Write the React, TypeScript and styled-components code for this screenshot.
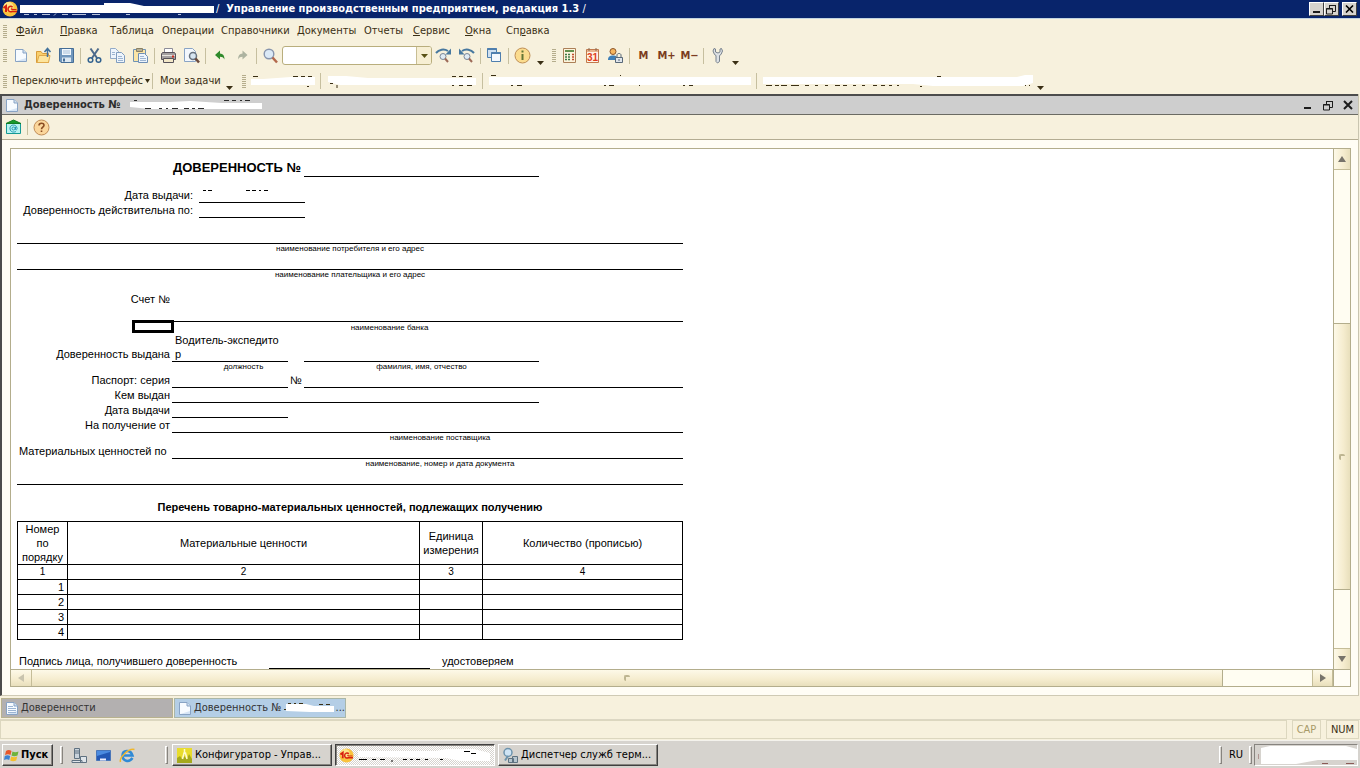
import React from "react";
import styled, { createGlobalStyle, css } from "styled-components";

const ui = `"DejaVu Sans Condensed", "DejaVu Sans", sans-serif`;
const cream = "#f7f1dd";
const ink = "#3a2f14";

const GlobalStyle = createGlobalStyle`
  * { box-sizing: border-box; }
  body { margin: 0; background: ${cream}; font: 11px/14px ${ui}; color: ${ink}; }
  button, input { font: inherit; color: inherit; margin: 0; padding: 0; border: 0; background: none; border-radius: 0; }
  svg { display: block; flex: none; }
`;

/* ---------- frame ---------- */
const Shell = styled.div`
  height: 100vh;
  display: flex;
  flex-direction: column;
  overflow: hidden;
  white-space: nowrap;
`;
const TitleBar = styled.header`
  flex: none;
  height: 19px;
  display: flex;
  align-items: center;
  padding: 0 3px 0 2px;
  background: #08246b;
  border-bottom: 1px solid #c3d4e0;
  color: #fff;
`;
const AppTitle = styled.h1`
  margin: 0;
  flex: 1;
  display: flex;
  align-items: center;
  gap: 2px;
  font-size: 11px;
  font-weight: bold;
`;
const Slash = styled.span`
  font-weight: normal;
`;
const CaptionButton = styled.button<{ $apart?: boolean }>`
  width: 15px;
  height: 14px;
  display: grid;
  place-items: center;
  background: #d6d3ce;
  border: 1px solid;
  border-color: #fff #404040 #404040 #fff;
  margin-left: ${(p) => (p.$apart ? 3 : 0)}px;
`;
const MenuBar = styled.nav`
  flex: none;
  height: 24px;
  display: flex;
  align-items: center;
  padding-left: 3px;
`;
const MenuList = styled.div`
  display: grid;
  grid-template-columns: 44px 50px 52px 59px 76px 67px 49px 52px 41px 60px;
  padding-left: 9px;
`;
const MenuItem = styled.button`
  text-align: left;
  font-size: 11px;
`;
const Grip = styled.span`
  flex: none;
  width: 4px;
  height: 13px;
  background: repeating-linear-gradient(#b5ad8c 0 1px, transparent 1px 2px);
`;
const ToolRow = styled.div<{ $h: number }>`
  flex: none;
  height: ${(p) => p.$h}px;
  display: flex;
  align-items: center;
  padding-left: 3px;
`;
const Tools = styled.div`
  display: flex;
  align-items: center;
  padding-left: 2px;
`;
const ToolButton = styled.button`
  width: 23px;
  height: 24px;
  display: grid;
  place-items: center;
`;
const MemoryButton = styled(ToolButton)`
  font-size: 11px;
  font-weight: bold;
  color: #7b3c22;
`;
const Divider = styled.span`
  flex: none;
  width: 1px;
  height: 16px;
  margin: 0 2px;
  background: #c6bf9f;
`;
const More = styled.button`
  width: 13px;
  height: 18px;
  display: grid;
  place-items: end center;
`;
const Combo = styled.div`
  width: 150px;
  height: 19px;
  display: flex;
  background: #fff;
  border: 1px solid #b9ae7d;
  border-radius: 3px;
  overflow: hidden;
`;
const ComboInput = styled.input`
  flex: 1;
  min-width: 0;
  outline: 0;
  padding-left: 4px;
`;
const ComboArrow = styled.button`
  width: 15px;
  display: grid;
  place-items: center;
  background: #f7efd3;
  border-left: 1px solid #c8be94;
`;
const TextButton = styled.button<{ $w: number }>`
  width: ${(p) => p.$w}px;
  display: flex;
  align-items: center;
  gap: 2px;
  padding-left: 5px;
`;

/* ---------- document window ---------- */
const Child = styled.section`
  flex: 1;
  min-height: 0;
  display: flex;
  flex-direction: column;
  margin-right: 1px;
  border-left: 2px solid #4c4c4c;
  border-right: 1px solid #c9c5b0;
  border-bottom: 1px solid #cfcab4;
  background: #fffdf5;
`;
const ChildTitle = styled.header`
  flex: none;
  height: 21px;
  display: flex;
  align-items: center;
  padding-left: 3px;
  background: #cecece;
  border-top: 2px solid #4c4c4c;
  border-bottom: 1px solid #6b6b63;
  color: #2c2c2c;
`;
const ChildName = styled.h2`
  flex: 1;
  margin: 0;
  display: flex;
  align-items: center;
  font-size: 11px;
  gap: 5px;
`;
const PlainButton = styled.button`
  width: 20px;
  height: 16px;
  display: grid;
  place-items: center;
`;
const ChildTools = styled.div`
  flex: none;
  height: 25px;
  display: flex;
  align-items: center;
  background: ${cream};
  border-bottom: 1px solid #b3ac92;
`;
const Viewer = styled.div`
  flex: 1;
  min-height: 0;
  margin: 8px 7px 8px 8px;
  display: grid;
  grid-template: minmax(0, 1fr) 17px / minmax(0, 1fr) 17px;
  border: 1px solid #b3ad8c;
`;
const Page = styled.main`
  overflow: hidden;
  background: #fff;
  color: #000;
  padding: 9px 6px 0;
  font: 11px/14px "Liberation Sans", Arial, sans-serif;
`;
const Bar = styled.div<{ $vertical?: boolean }>`
  display: flex;
  flex-direction: ${(p) => (p.$vertical ? "column" : "row")};
  background: #fffdf2;
  border: 0 solid #b3ad8c;
  ${(p) => (p.$vertical ? css`border-left-width: 1px;` : css`border-top-width: 1px;`)}
`;
const barFill = (v?: boolean) =>
  `linear-gradient(${v ? "90deg" : "180deg"}, #fdf9e8, #f5ecce 60%, #e8dfbc)`;
const BarButton = styled.button<{ $vertical?: boolean }>`
  flex: 0 0 21px;
  display: grid;
  place-items: center;
  background: ${(p) => barFill(p.$vertical)};
  border: 0 solid #c5bd98;
  ${(p) => (p.$vertical ? css`border-width: 1px 0;` : css`border-width: 0 1px;`)}
  &:first-child { border-top-width: 0; border-left-width: 0; }
  &:last-child { border-bottom-width: 0; }
`;
const Track = styled.div<{ $grow: number }>`
  flex: ${(p) => p.$grow} 1 0;
`;
const Thumb = styled(Track)<{ $vertical?: boolean }>`
  display: grid;
  place-items: center;
  background: ${(p) => barFill(p.$vertical)};
  border: 0 solid #b3ad8c;
  ${(p) => (p.$vertical ? css`border-width: 1px 0;` : css`border-width: 0 1px 0 0;`)}
  &::after { content: ""; width: 4px; height: 4px; border: 1px solid #bdb591; border-width: 2px 0 0 2px; border-radius: 2px; }
`;
const Corner = styled.div`
  background: #fffdf5;
  border-top: 1px solid #b3ad8c;
  border-left: 1px solid #b3ad8c;
`;

/* ---------- printed form ---------- */
const Form = styled.article`
  width: 666px;
`;
const Row = styled.div<{ $h: number }>`
  height: ${(p) => p.$h}px;
  display: flex;
  align-items: flex-end;
`;
const Label = styled.span<{ $w: number; $left?: boolean }>`
  width: ${(p) => p.$w}px;
  padding: 0 2px 1px;
  text-align: ${(p) => (p.$left ? "left" : "right")};
`;
const Blank = styled.span<{ $w?: number }>`
  ${(p) => (p.$w ? `width: ${p.$w}px;` : "flex: 1;")}
  align-self: stretch;
  display: flex;
  align-items: flex-end;
  border-bottom: 1px solid #000;
`;
const Space = styled.span<{ $w: number }>`
  width: ${(p) => p.$w}px;
`;
const Hint = styled.span<{ $w?: number }>`
  ${(p) => (p.$w ? `width: ${p.$w}px;` : "flex: 1;")}
  text-align: center;
  font-size: 8px;
  line-height: 10px;
`;
const FormTitle = styled.h3`
  margin: 0;
  width: 287px;
  padding-right: 3px;
  text-align: right;
  font-size: 13px;
  line-height: 18px;
`;
const ActiveCell = styled.span`
  width: 42px;
  height: 13px;
  border: 3px solid #000;
`;
const Position = styled.span`
  width: 112px;
  padding-left: 3px;
  white-space: pre-line;
`;
const ListTitle = styled.h4`
  margin: 0;
  padding: 15px 0 7px;
  text-align: center;
  font-size: 11px;
  line-height: 14px;
`;
const Goods = styled.table`
  width: 666px;
  table-layout: fixed;
  border-collapse: collapse;
  white-space: normal;
  th, td { border: 1px solid #000; padding: 0; height: 15px; line-height: 14px; font-weight: normal; text-align: center; }
  th:first-child { padding: 0 4px; }
  tbody td:first-child { text-align: right; padding-right: 3px; }
  thead tr:first-child th { height: 43px; }
  thead tr + tr th { font-size: 10px; }
`;

/* ---------- bottom bars ---------- */
const WindowTabs = styled.div`
  flex: none;
  height: 24px;
  display: flex;
  gap: 1px;
  padding: 2px 1px;
  border-bottom: 1px solid #dcd7c3;
`;
const WindowTab = styled.button<{ $active?: boolean }>`
  width: 172px;
  height: 20px;
  display: flex;
  align-items: center;
  gap: 2px;
  padding-left: 3px;
  border: 1px solid ${(p) => (p.$active ? "#a9b6a8" : "#b8b28f")};
  background: ${(p) => (p.$active ? "#b4cee6" : "#b3b0b0")};
  color: #333;
`;
const StatusBar = styled.footer`
  flex: none;
  height: 20px;
  display: flex;
  gap: 5px;
  padding: 0 1px 1px 0;
`;
const StatusCell = styled.span<{ $w?: number; $dim?: boolean }>`
  ${(p) => (p.$w ? `width: ${p.$w}px;` : "flex: 1;")}
  display: grid;
  place-items: center;
  border: 1px solid #dcd7bf;
  color: ${(p) => (p.$dim ? "#a89a68" : ink)};
`;
const Taskbar = styled.footer`
  flex: none;
  height: 28px;
  display: flex;
  align-items: center;
  padding: 2px 2px 1px;
  background: #d6d3ce;
  border-top: 1px solid #f4f2ec;
  color: #000;
`;
const raised = css`
  border: 1px solid;
  border-color: #fff #404040 #404040 #fff;
  box-shadow: inset -1px -1px #87847f;
`;
const StartButton = styled.button`
  width: 51px;
  height: 22px;
  display: flex;
  align-items: center;
  gap: 1px;
  padding-left: 1px;
  font-weight: bold;
  ${raised}
`;
const TaskGrip = styled.span<{ $m: string }>`
  width: 3px;
  height: 18px;
  margin: ${(p) => p.$m};
  border: 1px solid;
  border-color: #fff #87847f #87847f #fff;
`;
const QuickIcon = styled.button`
  width: 24px;
  height: 20px;
  display: grid;
  place-items: center;
`;
const Task = styled.button<{ $active?: boolean }>`
  width: 160px;
  height: 22px;
  margin-right: 3px;
  display: flex;
  align-items: center;
  gap: 2px;
  padding-left: 3px;
  ${raised}
  ${(p) =>
    p.$active &&
    css`
      border-color: #404040 #fff #fff #404040;
      box-shadow: inset 1px 1px #87847f;
      background: repeating-conic-gradient(#fff 0 25%, #d6d3ce 0 50%) 0 0 / 2px 2px;
    `}
`;
const Stretch = styled.span`
  flex: 1;
`;
const Tray = styled.span`
  width: 104px;
  height: 22px;
  display: flex;
  align-items: center;
  padding-left: 3px;
  border: 1px solid;
  border-color: #87847f #fff #fff #87847f;
`;

/* ---------- drawings ---------- */
const Svg = ({ w = 17, h = 17, children }: { w?: number; h?: number; children: React.ReactNode }) => (
  <svg width={w} height={h} viewBox={`0 0 ${w} ${h}`} fill="none" aria-hidden="true">
    {children}
  </svg>
);
const Down = ({ color = ink, w = 7 }: { color?: string; w?: number }) => (
  <Svg w={w} h={4}>
    <path d={`M0 0H${w}L${w / 2} 4Z`} fill={color} />
  </Svg>
);
const Triangle = ({ turn }: { turn: "up" | "down" | "left" | "right" }) => {
  const d = { up: "M4 1L8 7H0Z", down: "M0 1H8L4 7Z", left: "M7 0V8L1 4Z", right: "M1 0V8L7 4Z" }[turn];
  return (
    <Svg w={8} h={8}>
      <path d={d} fill={turn === "left" ? "#c9c4ae" : "#77736a"} />
    </Svg>
  );
};
const OneC = ({ size = 16 }: { size?: number }) => (
  <svg width={size} height={size} viewBox="0 0 16 16" aria-hidden="true">
    <circle cx="8" cy="8" r="7.500" fill="#f9c23c" />
    <circle cx="6.500" cy="6" r="5" fill="#fde489" />
    <path d="M1.500 7l2.500-2v6" stroke="#d8200f" strokeWidth="2" fill="none" />
    <path d="M10.500 6.200C9 4.500 6 5.300 6 8c0 2.500 2 3 4 2.500h5" stroke="#d8200f" strokeWidth="1.600" fill="none" />
    <path d="M10.500 7.800c-1.500-.6-2 .4-1 .7h5" stroke="#d8200f" strokeWidth="1" fill="none" />
  </svg>
);
const Sheet = ({ lined }: { lined?: boolean }) => (
  <Svg w={14} h={15}>
    <path d="M1.500 1.500H9L12.500 5V13.500H1.500Z" fill="#f7fbff" stroke="#88a3c4" />
    <path d="M9 1.500V5H12.500" stroke="#88a3c4" fill="#cfe0f2" />
    <path d="M2.500 13H12V10Z" fill="#d5e4f5" />
    {lined && <path d="M3 5.500h5M3 7.500h8M3 9.500h8M3 11.500h8" stroke="#9bb4d3" />}
  </Svg>
);
const icons = {
  open: (
    <Svg>
      <path d="M1.500 15.500V4.500H6L7.500 6.500H13.500V15.500Z" fill="#f9cf6c" stroke="#d99c3a" />
      <path d="M2 15.500L4 8.500H15L13.500 15.500Z" fill="#fde59d" stroke="#e0a94b" />
      <path d="M12.500 10V2.500M9.500 5l3-3.500 3 3.500" stroke="#41719b" strokeWidth="1.500" />
    </Svg>
  ),
  save: (
    <Svg>
      <path d="M1.500 1.500H15.500V15.500H3L1.500 14Z" fill="#7197bd" stroke="#456d96" />
      <path d="M4 2H13V8H4Z" fill="#f1f7fc" />
      <path d="M5 4h7M5 6h7" stroke="#a6bfd8" />
      <path d="M4 10.500H13V15H4Z" fill="#dce8f2" />
      <path d="M6 11.500v3" stroke="#456d96" strokeWidth="2" />
    </Svg>
  ),
  cut: (
    <Svg>
      <path d="M4.500 1.500L11 11M12.500 1.500L6 11" stroke="#4d6a8b" strokeWidth="2" />
      <circle cx="4.500" cy="13" r="2.300" stroke="#31618f" strokeWidth="1.500" />
      <circle cx="12.500" cy="13" r="2.300" stroke="#31618f" strokeWidth="1.500" />
    </Svg>
  ),
  copy: (
    <Svg>
      <path d="M1.500 1.500H6.500L9.500 4.500V11.500H1.500Z" fill="#eef5fc" stroke="#93abc8" />
      <path d="M7.500 5.500H12.500L15.500 8.500V15.500H7.500Z" fill="#eef5fc" stroke="#7f9cbf" />
      <path d="M3 5.500h3M3 7.500h3M9 9.500h4M9 11.500h5M9 13.500h5" stroke="#9db5d2" />
    </Svg>
  ),
  paste: (
    <Svg>
      <path d="M1.500 2.500H13.500V14.500H1.500Z" fill="#fbe5a6" stroke="#6f93b5" />
      <path d="M4.500 1.500H10.500V4.500H4.500Z" fill="#b9b196" stroke="#8a8165" />
      <path d="M6.500 6.500H12.500L15.500 9.500V15.500H6.500Z" fill="#eef5fc" stroke="#6f8fb5" />
      <path d="M8 9.500h4M8 11.500h6M8 13.500h6" stroke="#9db5d2" />
    </Svg>
  ),
  print: (
    <Svg>
      <path d="M4.500 6V1.500H12.500V6" fill="#fff" stroke="#8d8d99" />
      <path d="M2.500 5.500H14.500L15.500 7V12.500H1.500V7Z" fill="#a4a0a0" stroke="#57525a" />
      <path d="M2 8.500H15" stroke="#e8e4df" />
      <path d="M3.500 11.500H13.500V15.500H3.500Z" fill="#f3e8c8" stroke="#57525a" />
      <path d="M12 9.500h2" stroke="#c52a1e" strokeWidth="2" />
    </Svg>
  ),
  preview: (
    <Svg>
      <path d="M1.500 1.500H9.500L12.500 4.500V14.500H1.500Z" fill="#f4f8fd" stroke="#8aa4c5" />
      <circle cx="10" cy="9" r="3.500" fill="#d7e5f1" stroke="#68737f" strokeWidth="1.500" />
      <path d="M12.500 11.500L16 15.500" stroke="#6b4a3c" strokeWidth="2.500" />
    </Svg>
  ),
  undo: (
    <Svg>
      <path d="M4 8L9 3.500V6.500C12 6.500 13.500 8.500 13.500 12.500C12.500 10.500 11 9.800 9 9.800V12.500Z" fill="#2f8a2b" />
    </Svg>
  ),
  redo: (
    <Svg>
      <path d="M13.500 8L8.500 3.500V6.500C5.500 6.500 4 8.500 4 12.500C5 10.500 6.500 9.800 8.500 9.800V12.500Z" fill="#adb3a0" />
    </Svg>
  ),
  find: (
    <Svg>
      <circle cx="7" cy="7" r="4.800" fill="#dbe9f6" stroke="#8795ad" strokeWidth="1.400" />
      <path d="M10.500 10.500L15 15.500" stroke="#b3684c" strokeWidth="2.500" />
    </Svg>
  ),
  next: (
    <Svg>
      <path d="M1 6C4 2.500 9 1.500 13 4" stroke="#47789f" strokeWidth="2" />
      <path d="M16 1.500V7.500H10.500Z" fill="#47789f" />
      <circle cx="8" cy="9.500" r="3" fill="#e0ebf4" stroke="#7b8798" />
      <path d="M10 11.500L13 15" stroke="#9d6a58" strokeWidth="2" />
    </Svg>
  ),
  prev: (
    <Svg>
      <path d="M16 6C13 2.500 8 1.500 4 4" stroke="#47789f" strokeWidth="2" />
      <path d="M1 1.500V7.500H6.500Z" fill="#47789f" />
      <circle cx="9" cy="9.500" r="3" fill="#e0ebf4" stroke="#7b8798" />
      <path d="M11 11.500L14 15" stroke="#9d6a58" strokeWidth="2" />
    </Svg>
  ),
  windows: (
    <Svg>
      <path d="M1.500 1.500H10.500V10.500H1.500Z" fill="#cfe0f0" stroke="#4f7fae" />
      <path d="M1.500 2H10.500" stroke="#4f7fae" strokeWidth="2" />
      <path d="M5.500 5.500H14.500V14.500H5.500Z" fill="#f4f8fc" stroke="#4f7fae" />
      <path d="M5.500 6H14.500" stroke="#4f7fae" strokeWidth="2" />
    </Svg>
  ),
  info: (
    <Svg>
      <circle cx="8.500" cy="8.500" r="7.500" fill="#fbdc8e" stroke="#bf8f55" />
      <path d="M8.500 7V13M8.500 3.500V5.500" stroke="#647534" strokeWidth="2" />
    </Svg>
  ),
  calc: (
    <Svg>
      <path d="M2.500 1.500H14.500V15.500H2.500Z" fill="#fdf4dc" stroke="#ac8058" />
      <path d="M4 4H13" stroke="#64904d" strokeWidth="2" />
      <path d="M4 7.500H10M4 10H10M4 12.500H10" stroke="#3f7a45" strokeWidth="1.500" strokeDasharray="2 1" />
      <path d="M11 7.500h2M11 10h2M11 12.500h2" stroke="#c04a2d" strokeWidth="1.500" />
    </Svg>
  ),
  calendar: (
    <Svg>
      <path d="M2.500 2.500H14.500V15.500H2.500Z" fill="#fff3e6" stroke="#c1794d" />
      <path d="M3 4H14" stroke="#e9b48e" strokeWidth="2" />
      <path d="M5 1v3M12 1v3" stroke="#8d6a50" />
      <text x="3" y="14" fontFamily="Liberation Sans, sans-serif" fontWeight="bold" fontSize="10" fill="#e03d1d">31</text>
    </Svg>
  ),
  user: (
    <Svg>
      <circle cx="6" cy="4.500" r="3" fill="#f5b55e" stroke="#8b5428" />
      <path d="M1 13C1 9.500 3 8.500 6 8.500S10.500 9.500 10.500 13Z" fill="#3d7fb8" />
      <path d="M8.500 10.500H15.500V15.500H8.500Z" fill="#dfe5eb" stroke="#586878" />
      <path d="M10 10V8C10 6 14 6 14 8V10" stroke="#586878" />
      <path d="M12 12v2" stroke="#586878" />
    </Svg>
  ),
  wrench: (
    <Svg>
      <path d="M5 1.500L4 4L5.500 7.500L7 8.500V14.500L8.500 16L10.500 14.500V8.500L12 7.500L13.500 4L12.500 1.500L11 2V5L9 6L6.500 5V2Z" fill="#dde1e5" stroke="#77818c" />
    </Svg>
  ),
  mail: (
    <Svg>
      <path d="M1.500 4.500H15.500V14.500H1.500Z" fill="#b8f3f1" stroke="#169a94" />
      <path d="M1 4.500L8.500 1L16 4.500Z" fill="#169a2c" stroke="#127d24" />
      <circle cx="8.500" cy="9.500" r="1.500" stroke="#2497b4" />
      <path d="M10.500 8V10.500C11 11.500 12.500 10.500 12 9C11 4.500 4.500 5.500 5 9.800C5.500 13.500 9 13.500 11 12.500" stroke="#2497b4" />
    </Svg>
  ),
  help: (
    <Svg>
      <circle cx="8.500" cy="8.500" r="7.500" fill="#fbd69b" stroke="#c08c57" />
      <path d="M6 6.500C6 3.500 11 3.500 11 6.300C11 8 8.500 8.200 8.500 10.200M8.500 11.500V13" stroke="#8a4c22" strokeWidth="1.600" />
    </Svg>
  ),
};
type IconName = keyof typeof icons;
const MinIcon = () => <Svg w={10} h={10}><path d="M1 8h7" stroke="#1c1c1c" strokeWidth="2" /></Svg>;
const RestoreIcon = () => (
  <Svg w={11} h={11}>
    <path d="M3.500 4V1.500H9.500V7.500H7M3 1.500h7" stroke="#1c1c1c" />
    <path d="M.5 4.500H6.500V10H.5ZM0 5h7" stroke="#1c1c1c" />
  </Svg>
);
const CloseIcon = () => <Svg w={10} h={10}><path d="M1 1L9 9M9 1L1 9" stroke="#1c1c1c" strokeWidth="2" /></Svg>;
const SmallCloseIcon = () => <Svg w={9} h={8}><path d="M1 .5L8 7.500M8 .5L1 7.500" stroke="#000" strokeWidth="1.600" /></Svg>;

/* white strip that hides a value, with the few strokes still visible round it */
const Covered = ({ w, shape, marks, ink: color = ink, h = 14 }: { w: number; shape: string; marks?: string; ink?: string; h?: number }) => (
  <Svg w={w} h={h}>
    <path d={shape} fill="#fff" />
    {marks && <path d={marks} stroke={color} strokeWidth="1" />}
  </Svg>
);

const Tool = ({ icon, label }: { icon: IconName; label: string }) => (
  <ToolButton aria-label={label}>{icons[icon]}</ToolButton>
);

const menu: [string, string, string][] = [
  ["", "Ф", "айл"],
  ["", "П", "равка"],
  ["Таблица", "", ""],
  ["Операции", "", ""],
  ["Справочники", "", ""],
  ["Документы", "", ""],
  ["Отчеты", "", ""],
  ["", "С", "ервис"],
  ["", "О", "кна"],
  ["Сп", "р", "авка"],
];

export default function App() {
  return (
    <>
      <GlobalStyle />
      <Shell>
        <TitleBar>
          <AppTitle>
            <OneC />
            <Covered w={194} shape="M0 3H84V1H110L124 4H194V11H0Z" marks="M4 12.500h5M14 12.500h3M22 12.500h8M34 13.500l2-2M42 12.500h6M52 12.500h14M72 12.500h8M106 12.500h4M158 12.500h3" ink="#b9c4dc" />
            <span>
              <Slash>/</Slash>&nbsp; Управление производственным предприятием, редакция 1.3 <Slash>/</Slash>
            </span>
          </AppTitle>
          <CaptionButton aria-label="Свернуть"><MinIcon /></CaptionButton>
          <CaptionButton aria-label="Восстановить"><RestoreIcon /></CaptionButton>
          <CaptionButton aria-label="Закрыть" $apart><SmallCloseIcon /></CaptionButton>
        </TitleBar>

        <MenuBar>
          <Grip />
          <MenuList>
            {menu.map(([a, key, b]) => (
              <MenuItem key={a + key + b}>{a}{key && <u>{key}</u>}{b}</MenuItem>
            ))}
          </MenuList>
        </MenuBar>

        <ToolRow $h={25}>
          <Grip />
          <Tools>
            <ToolButton aria-label="Создать"><Sheet /></ToolButton>
            <Tool icon="open" label="Открыть" />
            <Tool icon="save" label="Сохранить" />
            <Divider />
            <Tool icon="cut" label="Вырезать" />
            <Tool icon="copy" label="Копировать" />
            <Tool icon="paste" label="Вставить" />
            <Divider />
            <Tool icon="print" label="Печать" />
            <Tool icon="preview" label="Просмотр" />
            <Divider />
            <Tool icon="undo" label="Отменить" />
            <Tool icon="redo" label="Повторить" />
            <Divider />
            <Tool icon="find" label="Найти" />
            <Combo>
              <ComboInput aria-label="Строка поиска" />
              <ComboArrow aria-label="Показать список"><Down color="#5a5216" /></ComboArrow>
            </Combo>
            <Tool icon="next" label="Найти далее" />
            <Tool icon="prev" label="Найти ранее" />
            <Divider />
            <Tool icon="windows" label="Окна" />
            <Divider />
            <Tool icon="info" label="Сведения" />
            <More aria-label="Ещё"><Down /></More>
          </Tools>
          <Space $w={5} />
          <Grip />
          <Tools>
            <Tool icon="calc" label="Калькулятор" />
            <Tool icon="calendar" label="Календарь" />
            <Tool icon="user" label="Пользователь" />
            <Divider />
            <MemoryButton>M</MemoryButton>
            <MemoryButton>M+</MemoryButton>
            <MemoryButton>M−</MemoryButton>
            <Divider />
            <Tool icon="wrench" label="Настройка" />
            <More aria-label="Ещё"><Down /></More>
          </Tools>
        </ToolRow>

        <ToolRow $h={26}>
          <Grip />
          <TextButton $w={143}>Переключить интерфейс <Down w={5} /></TextButton>
          <Divider />
          <TextButton $w={68}>Мои задачи</TextButton>
          <More aria-label="Ещё"><Down /></More>
          <Space $w={6} />
          <Grip />
          <Tools>
            <Space $w={3} />
            <Covered w={67} shape="M0 5H12L40 3H64V11H0Z" marks="M2 2.500h5M42 2.500h5M50 2.500h4M57 2.500h4M56 12.500h2" />
            <Divider />
            <Space $w={5} />
            <Covered w={152} shape="M0 2H18L40 4H148V11H12L0 8Z" marks="M2 9.500h3M9 11v3M124 2.500h4M131 2.500h4M139 2.500h5M124 11.500h2M131 11.500h4M139 11.500h5" />
            <Divider />
            <Space $w={4} />
            <Covered w={265} shape="M0 3H262V11H0Z" marks="M2 1.500h5M131 1.500h1M22 11.500h2M28 11.500h5M115 11.500h2M120 11.500h5M150 11.500h1M194 11.500h2M200 11.500h4" />
            <Divider />
            <Space $w={4} />
            <Covered w={271} shape="M0 3H254L262 1H270V9L260 12H170L150 10H0Z" marks="M3 11.500h6M12 11.500h4M18 11.500h6M28 11.500h8M42 11.500h4M52 11.500h3M62 11.500h3M72 11.500h5M80 11.500h4M90 11.500h3M99 11.500h3M110 11.500h4M118 11.500h4M126 11.500h3M134 11.500h2M157 12.500h2M174 2.500h4M262 11.500h1M266 11.500h1" />
            <More aria-label="Ещё"><Down /></More>
          </Tools>
        </ToolRow>

        <Child>
          <ChildTitle>
            <ChildName>
              <Sheet />
              <span>Доверенность №</span>
              <Space $w={0} />
              <Covered w={133} shape="M0 4H40L60 3L92 5H132V11H20L0 9Z" marks="M4 2.500h3M15 10.500h6M29 10.500h3M36 10.500h2M42 10.500h6M54 10.500h5M62 10.500h3M68 10.500h6M94 2.500h5M102 2.500h4M110 2.500h2M115 2.500h5" ink="#2c2c2c" />
            </ChildName>
            <PlainButton aria-label="Свернуть документ"><MinIcon /></PlainButton>
            <PlainButton aria-label="Восстановить документ"><RestoreIcon /></PlainButton>
            <PlainButton aria-label="Закрыть документ"><CloseIcon /></PlainButton>
          </ChildTitle>
          <ChildTools>
            <Tool icon="mail" label="Отправить" />
            <Divider />
            <Tool icon="help" label="Справка" />
          </ChildTools>

          <Viewer>
            <Page>
              <Form>
                <Row $h={19}><FormTitle>ДОВЕРЕННОСТЬ №</FormTitle><Blank $w={235} /></Row>
                <Row $h={26}>
                  <Label $w={178}>Дата выдачи:</Label><Space $w={4} />
                  <Blank $w={106}>
                    <Covered w={80} h={14} shape="M0 3H80V12H0Z" marks="M4 2.500h3M9 2.500h4M47 2.500h4M53 2.500h4M60 2.500h2M65 2.500h4" ink="#000" />
                  </Blank>
                </Row>
                <Row $h={15}><Label $w={178}>Доверенность действительна по:</Label><Space $w={4} /><Blank $w={106} /></Row>
                <Row $h={26}><Blank /></Row>
                <Row $h={10}><Hint>наименование потребителя и его адрес</Hint></Row>
                <Row $h={16}><Blank /></Row>
                <Row $h={10}><Hint>наименование плательщика и его адрес</Hint></Row>
                <Row $h={27}><Label $w={155}>Счет №</Label></Row>
                <Row $h={15}><Space $w={157} /><Blank /></Row>
                <Row $h={11}><Space $w={115} /><ActiveCell /><Space $w={68} /><Hint $w={295}>наименование банка</Hint></Row>
                <Row $h={29}>
                  <Label $w={155}>Доверенность выдана</Label>
                  <Blank $w={116}><Position>{"Водитель-экспедито\nр"}</Position></Blank>
                  <Space $w={16} /><Blank $w={235} />
                </Row>
                <Row $h={10}><Space $w={155} /><Hint $w={143}>должность</Hint><Hint $w={213}>фамилия, имя, отчество</Hint></Row>
                <Row $h={16}><Label $w={155}>Паспорт: серия</Label><Blank $w={116} /><Label $w={16} $left>№</Label><Blank /></Row>
                <Row $h={15}><Label $w={155}>Кем выдан</Label><Blank $w={367} /></Row>
                <Row $h={15}><Label $w={155}>Дата выдачи</Label><Blank $w={116} /></Row>
                <Row $h={15}><Label $w={155}>На получение от</Label><Blank /></Row>
                <Row $h={10}><Space $w={180} /><Hint>наименование поставщика</Hint></Row>
                <Row $h={16}><Label $w={155} $left>Материальных ценностей по</Label><Blank /></Row>
                <Row $h={10}><Space $w={180} /><Hint>наименование, номер и дата документа</Hint></Row>
                <Row $h={16}><Blank /></Row>
                <ListTitle>Перечень товарно-материальных ценностей, подлежащих получению</ListTitle>
                <Goods>
                  <colgroup><col style={{ width: 50 }} /><col /><col style={{ width: 63 }} /><col style={{ width: 200 }} /></colgroup>
                  <thead>
                    <tr><th>Номер по порядку</th><th>Материальные ценности</th><th>Единица измерения</th><th>Количество (прописью)</th></tr>
                    <tr><th>1</th><th>2</th><th>3</th><th>4</th></tr>
                  </thead>
                  <tbody>
                    {[1, 2, 3, 4].map((n) => <tr key={n}><td>{n}</td><td /><td /><td /></tr>)}
                  </tbody>
                </Goods>
                <Row $h={29}>
                  <Label $w={252} $left>Подпись лица, получившего доверенность</Label>
                  <Blank $w={161} /><Space $w={10} /><Label $w={100} $left>удостоверяем</Label>
                </Row>
              </Form>
            </Page>
            <Bar $vertical>
              <BarButton $vertical aria-label="Вверх"><Triangle turn="up" /></BarButton>
              <Track $grow={154} />
              <Thumb $grow={267} $vertical />
              <Track $grow={58} />
              <BarButton $vertical aria-label="Вниз"><Triangle turn="down" /></BarButton>
            </Bar>
            <Bar>
              <BarButton aria-label="Влево"><Triangle turn="left" /></BarButton>
              <Thumb $grow={1191} />
              <Track $grow={89} />
              <BarButton aria-label="Вправо"><Triangle turn="right" /></BarButton>
            </Bar>
            <Corner />
          </Viewer>
        </Child>

        <WindowTabs>
          <WindowTab><Sheet lined />Доверенности</WindowTab>
          <WindowTab $active>
            <Sheet />Доверенность №
            <Covered w={50} shape="M2 3H22L30 5H50V11H26L2 10Z" marks="M0 8.500h2M4 2.500h3M10 2.500h2M15 2.500h4M35 3.500h4M42 3.500h4" />
            <span>...</span>
          </WindowTab>
        </WindowTabs>
        <StatusBar>
          <StatusCell />
          <StatusCell $w={29} $dim>CAP</StatusCell>
          <StatusCell $w={33}>NUM</StatusCell>
        </StatusBar>

        <Taskbar>
          <StartButton>
            <Svg w={16} h={16}>
              <path d="M2 4C4 2.500 6 3 7.500 4L6.500 8C5 7 3 7 1 8Z" fill="#e8572a" />
              <path d="M8.500 4.500C10 5.500 12.500 5.500 14.500 4.500L13.500 8.500C11.500 9.500 9 9.500 7.500 8.500Z" fill="#6fb33c" />
              <path d="M.8 9C2.500 8 4.500 8 6.200 9L5.200 13C3.500 12 2 12 0 13Z" fill="#3d82d2" />
              <path d="M7.200 9.500C9 10.500 11 10.500 13.200 9.500L12.200 13.500C10 14.500 8 14.500 6.200 13.500Z" fill="#f4bf2c" />
            </Svg>
            Пуск
          </StartButton>
          <TaskGrip $m="0 4px 0 7px" />
          <QuickIcon aria-label="Серверы">
            <Svg>
              <path d="M3.500 1.500H8.500V11.500H3.500Z" fill="#c9d3dc" stroke="#5f7180" />
              <path d="M4 4h4M4 6h4" stroke="#5f7180" />
              <path d="M1 13.500H11V15.500H1ZM9.500 9.500H15.500V15.500H9.500Z" fill="#dfe5ea" stroke="#5f7180" />
            </Svg>
          </QuickIcon>
          <QuickIcon aria-label="Рабочий стол">
            <Svg>
              <path d="M1.500 3.500H15.500V13.500H1.500Z" fill="#2458b5" stroke="#4a76b8" />
              <path d="M2 9L15 5V4H2Z" fill="#4c8be0" />
              <path d="M5 12.500h6" stroke="#eef" strokeWidth="2" />
            </Svg>
          </QuickIcon>
          <QuickIcon aria-label="Обозреватель">
            <Svg>
              <path d="M13.500 11C10 16 3.500 14 3.500 8.500S11.500 2 13.500 8.500H5" stroke="#2f8ad6" strokeWidth="2.500" />
              <path d="M1.500 15C0 11 9 1 15.500 2.500" stroke="#f0b72c" strokeWidth="1.500" />
            </Svg>
          </QuickIcon>
          <TaskGrip $m="0 4px 0 26px" />
          <Task>
            <Svg>
              <path d="M1 1H16V16H1Z" fill="#e8dc2c" />
              <path d="M1 16V11L4 9L6 12L8 9L11 12L13 7L16 12V16Z" fill="#a5a91c" />
              <path d="M8.500 2V7M6.500 12L8 6H9.500L11 12" stroke="#fffbd0" strokeWidth="1.500" />
            </Svg>
            Конфигуратор - Управ...
          </Task>
          <Task $active>
            <OneC size={15} />
            <Covered w={136} shape="M2 3H80L90 1H118L134 5V13H104L90 10L2 9Z" marks="M3 11.500h8M16 11.500h4M24 11.500h5M36 12v2M47 11.500h4M54 11.500h3M60 11.500h4M69 11.500h3M84 11.500h3M108 3.500h6M115 5.500h5" ink="#000" />
          </Task>
          <Task>
            <Svg>
              <circle cx="6" cy="5.500" r="4" fill="#cfe4f4" stroke="#6d93ac" strokeWidth="1.500" />
              <path d="M3 13.500L6 9" stroke="#6d93ac" strokeWidth="2" />
              <path d="M6.500 11.500H11.500V15.500H6.500ZM10.500 9.500H15.500V15.500H10.500Z" fill="#b7c6cf" stroke="#5e7280" />
            </Svg>
            Диспетчер служб терм...
          </Task>
          <Stretch />
          <TaskGrip $m="0 7px 0 0" />
          <span>RU</span>
          <TaskGrip $m="0 2px 0 6px" />
          <Tray>
            <Covered w={99} h={20} shape="M3 3L12 1H88L99 4V15H60L38 19H3Z" marks="M0 9v5M64 18.500h6M88 18.500h8" ink="#8a5a56" />
          </Tray>
        </Taskbar>
      </Shell>
    </>
  );
}
